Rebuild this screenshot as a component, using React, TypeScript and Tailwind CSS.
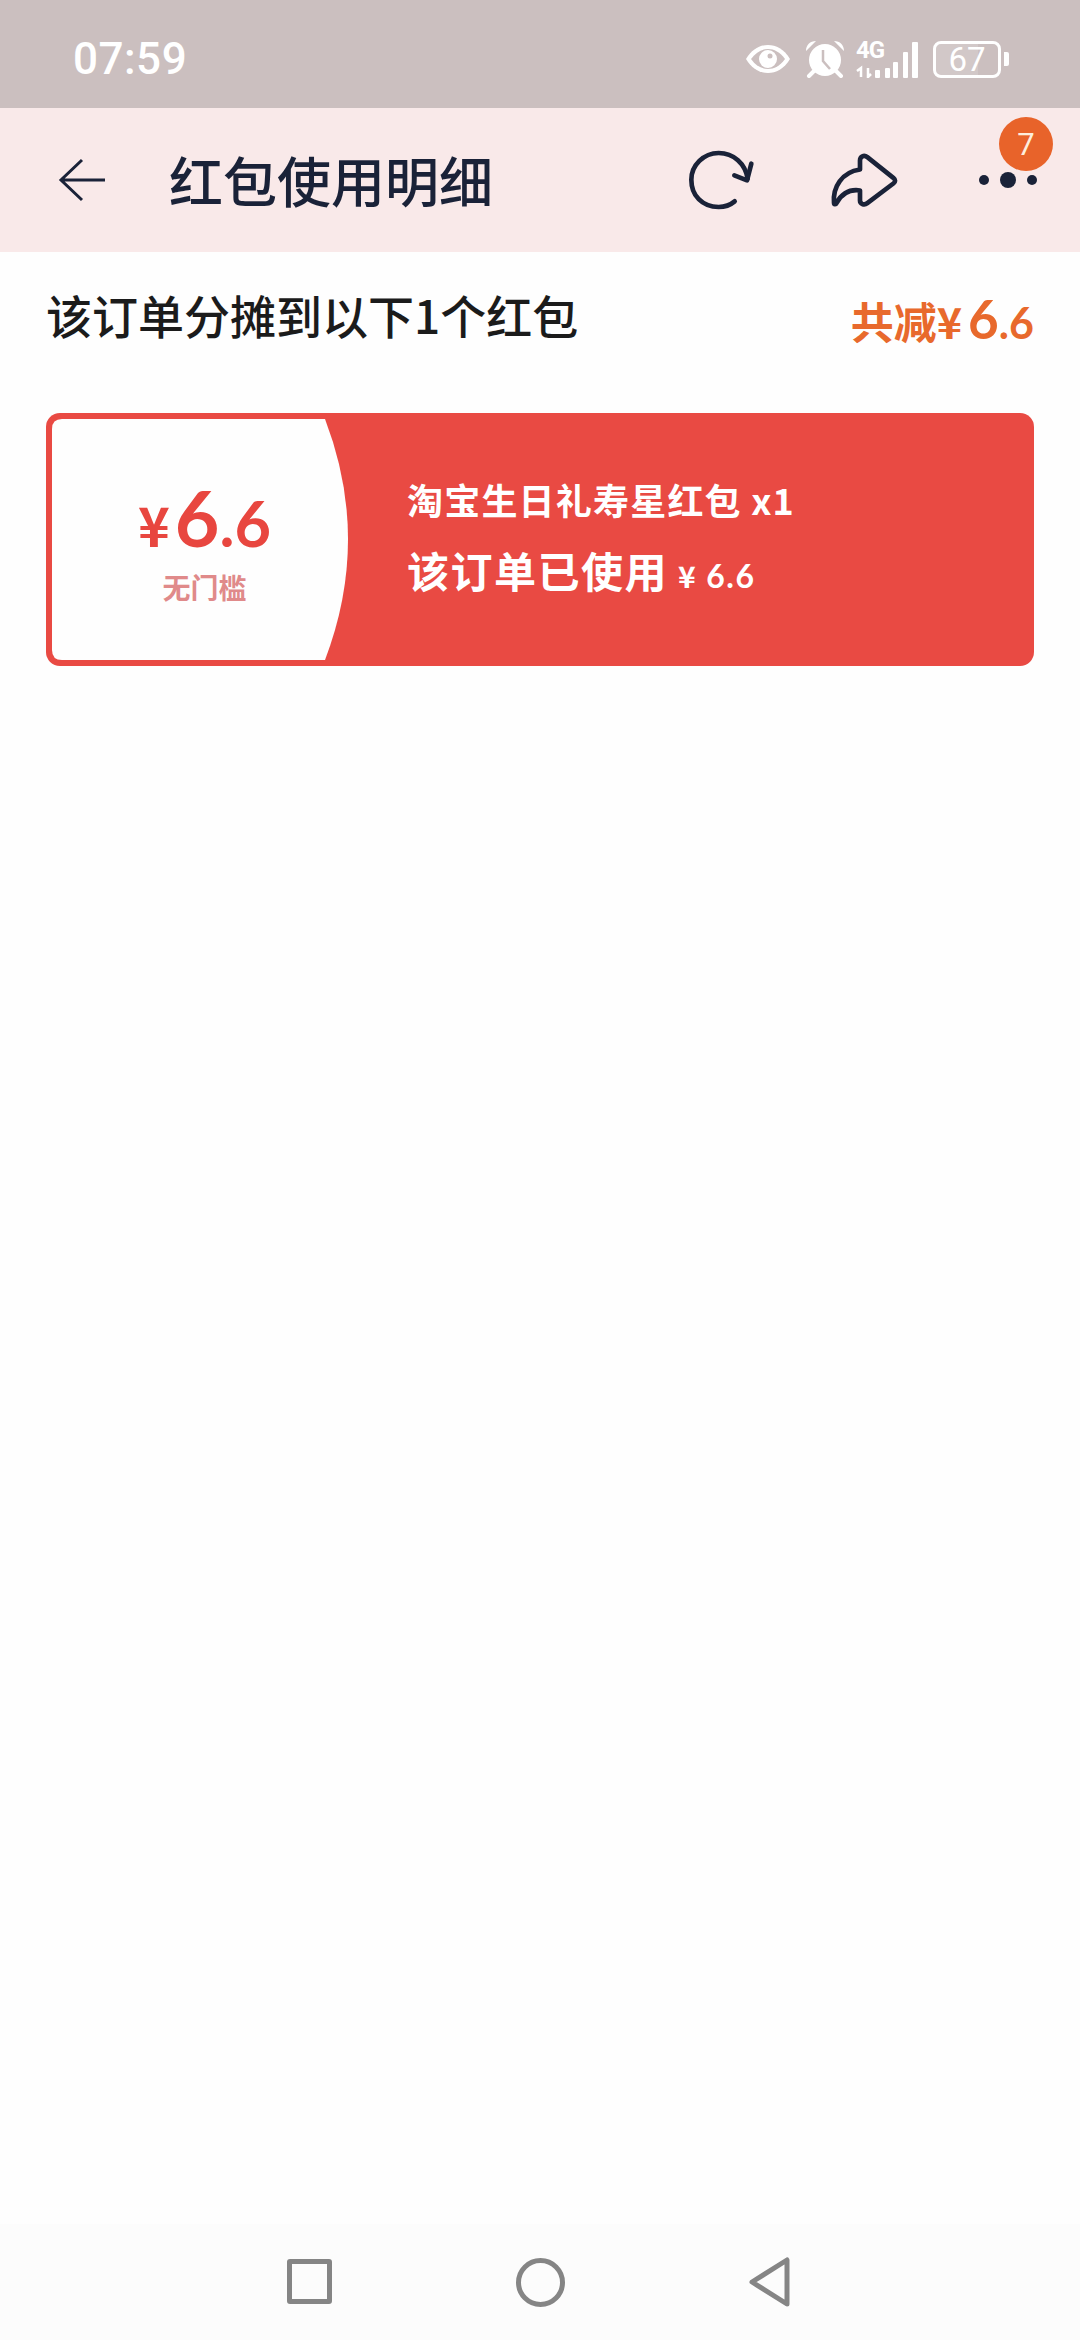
const cjk = "font-['Noto_Sans_CJK_SC','Noto_Sans',sans-serif]"

function StatusIcons() {
  return (
    <div className="flex items-center">
      <svg width="46" height="30" viewBox="0 0 46 30" className="mr-[14px]">
        <path d="M1 15C7 5 15 1 23 1s16 4 22 14c-6 10-14 14-22 14S7 25 1 15Z" fill="#fff" />
        <path d="M6 15c5-7 11-10 17-10s12 3 17 10c-5 7-11 10-17 10S11 22 6 15Z" fill="#cbbfbf" />
        <circle cx="23" cy="15" r="9" fill="#fff" />
        <circle cx="25" cy="12" r="2.5" fill="#cbbfbf" />
      </svg>
      <svg width="40" height="38" viewBox="0 0 40 38" className="mr-[10px]">
        <circle cx="20" cy="20" r="16" fill="#fff" />
        <path d="M1 11C1 5 5 1 11 1Z M39 11c0-6-4-10-10-10Z" fill="#fff" />
        <path d="M9 31l-5 5M31 31l5 5" stroke="#fff" strokeWidth="4" strokeLinecap="round" />
        <path d="M18 10v11l7 8" stroke="#cbbfbf" strokeWidth="2.5" fill="none" />
      </svg>
      <div className="relative w-[64px] h-[38px] mr-[14px]">
        <span className="absolute left-[1px] top-[-3px] text-[24px] leading-[26px] font-bold text-white font-['Roboto',sans-serif] tracking-[-1px]">4G</span>
        <svg width="64" height="38" viewBox="0 0 64 38" className="absolute inset-0">
          <path d="M6 37v-9l-4 3M13 28v9l3-3" stroke="#fff" strokeWidth="2.5" fill="none" />
          <rect x="20" y="30" width="5" height="8" rx="1" fill="#fff" />
          <rect x="30" y="28" width="5" height="10" rx="1" fill="#fff" />
          <rect x="38" y="22" width="5" height="16" rx="1" fill="#fff" />
          <rect x="48" y="12" width="5" height="26" rx="1" fill="#fff" />
          <rect x="57" y="2" width="6" height="36" rx="1" fill="#fff" />
        </svg>
      </div>
      <div className="relative w-[68px] h-[37px] rounded-[8px] border-[3px] border-white flex items-center justify-center overflow-hidden text-[33px] leading-none text-white font-['Roboto',sans-serif]">
        <div className="absolute left-0 top-0 bottom-0 w-[67%] bg-white/15" />
        <span className="relative">67</span>
      </div>
      <div className="w-[5px] h-[14px] bg-white rounded-r-[2px] ml-[3px]" />
    </div>
  )
}

export default function App() {
  return (
    <div className={`w-[1080px] h-[2340px] bg-[#fefefe] flex flex-col ${cjk}`}>
      <div className="h-[108px] bg-[#cbbfbf] flex items-center justify-between pt-[10px] pl-[73px] pr-[71px]">
        <span className="text-[44px] leading-none font-medium tracking-[0.5px] text-white font-['Roboto',sans-serif]">07:59</span>
        <StatusIcons />
      </div>

      <div className="relative h-[144px] bg-[#f9e9e9] flex items-center pl-[58px] text-[#1a2238]">
        <svg width="48" height="44" viewBox="0 0 48 44" fill="none" stroke="currentColor" strokeWidth="3" className="mr-[63px]">
          <path d="M24 2 3 22l21 20M3 22h44" />
        </svg>
        <span className="text-[54px] leading-none font-medium">红包使用明细</span>
        <svg width="70" height="65" viewBox="140 440 210 195" fill="none" stroke="currentColor" strokeWidth="14" strokeLinecap="round" strokeLinejoin="round" className="absolute left-[687px] top-[39px]">
          <path d="M283 603C265 618 245 620 235 620C185 620 153 585 153 538C153 495 190 458 235 458C280 458 315 490 322 535" />
          <path d="M333 490 320 540 282 525" />
        </svg>
        <svg width="70" height="57" viewBox="570 455 210 170" fill="none" stroke="currentColor" strokeWidth="14" strokeLinejoin="round" className="absolute left-[830px] top-[44px]">
          <path d="M582 607C578 560 605 515 660 507L660 480C660 468 672 462 682 470L760 532C767 538 767 543 760 549L682 608C672 616 660 610 660 600L660 570C625 565 605 580 590 607C587 613 582 612 582 607Z" />
        </svg>
        <div className="absolute left-[979px] top-[64px] flex items-center gap-[11px]">
          <div className="size-[10px] rounded-full bg-current" />
          <div className="size-[16px] rounded-full bg-current" />
          <div className="size-[10px] rounded-full bg-current" />
        </div>
        <div className="absolute left-[999px] top-[9px] size-[54px] rounded-full bg-[#e8632a] flex items-center justify-center text-[31px] leading-none text-[#fdeedd] font-['Roboto',sans-serif]">
          7
        </div>
      </div>

      <div className="flex items-start justify-between pl-[46px] pr-[46px] pt-[30px]">
        <span className="text-[46px] leading-[64px] font-medium text-[#1b1b1b]">该订单分摊到以下1个红包</span>
        <span className="flex items-baseline text-[#e8692c] font-bold mt-[5px]">
          <span className="text-[43px] leading-[64px]">共减¥</span>
          <span className="text-[53px] leading-[64px] font-['Lato',sans-serif] ml-[6px]">6</span>
          <span className="text-[43px] leading-[64px] font-['Lato',sans-serif]">.6</span>
        </span>
      </div>

      <div className="mx-[46px] mt-[58px] h-[253px] rounded-[14px] bg-[#e94a43] p-[6px] flex items-stretch">
        <div className="w-[297px] h-[241px] bg-[#fefefe] flex flex-col items-center pt-[67px] pl-[8px] [clip-path:path('M10_0H273Q319_120_273_241H10Q0_241_0_231V10Q0_0_10_0Z')]">
          <span className="flex items-baseline text-[#e8463f] font-bold font-['Lato',sans-serif] leading-none">
            <span className="text-[54px] leading-[62px] mr-[5px] font-['Noto_Sans_CJK_SC',sans-serif]">¥</span>
            <span className="text-[77px] leading-[62px]">6</span>
            <span className="text-[63px] leading-[62px]">.6</span>
          </span>
          <span className="text-[28px] leading-[36px] mt-[14px] font-bold text-[#e08a8a]">无门槛</span>
        </div>
        <div className="flex flex-col pl-[58px] pt-[55px] text-white font-bold">
          <span className="text-[36px] leading-[50px] tracking-[1.2px]">淘宝生日礼寿星红包 x1</span>
          <span className="text-[42px] leading-[50px] mt-[21px] flex items-baseline tracking-[1.5px]">
            该订单已使用
            <span className="text-[30px] ml-[10px] mr-[9px]">¥</span>
            <span className="text-[32px] font-['Lato',sans-serif]">6.6</span>
          </span>
        </div>
      </div>

      <div className="mt-auto h-[116px] bg-[#fcfcfc] flex items-center justify-between pl-[287px] pr-[289px]">
        <div className="w-[45px] h-[45px] mt-[-2px] rounded-[3px] border-[5px] border-[#858585]" />
        <div className="size-[49px] rounded-full border-[5px] border-[#858585]" />
        <svg width="42" height="50" viewBox="0 0 42 50" fill="none" stroke="#858585" strokeWidth="5" strokeLinejoin="round">
          <path d="M38 3v44L3 25Z" />
        </svg>
      </div>
    </div>
  )
}
